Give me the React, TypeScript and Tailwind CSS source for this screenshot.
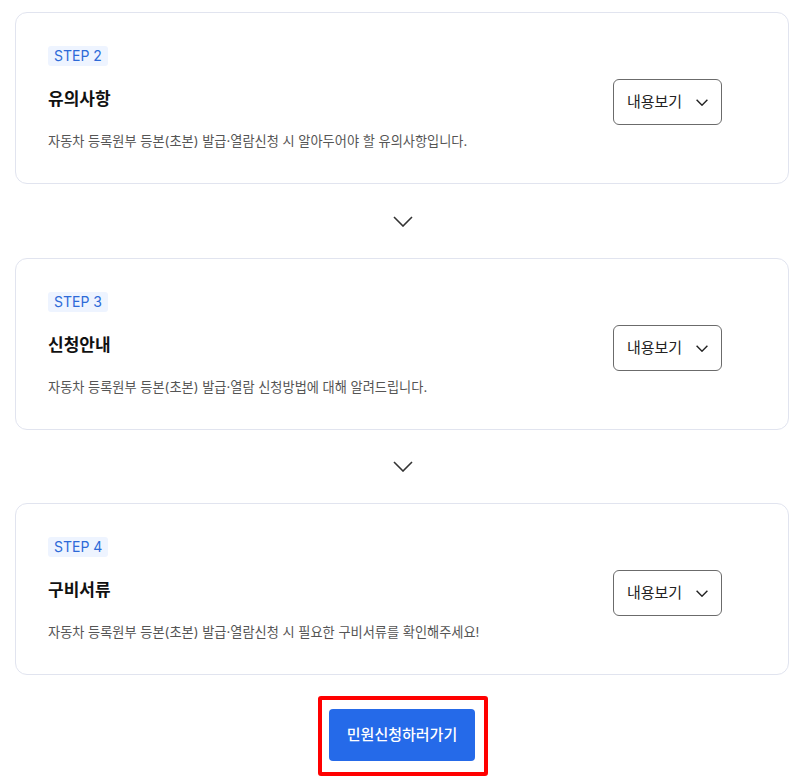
import React from "react";

const steps = [
  { step: "STEP 2", title: "유의사항", desc: "자동차 등록원부 등본(초본) 발급·열람신청 시 알아두어야 할 유의사항입니다." },
  { step: "STEP 3", title: "신청안내", desc: "자동차 등록원부 등본(초본) 발급·열람 신청방법에 대해 알려드립니다." },
  { step: "STEP 4", title: "구비서류", desc: "자동차 등록원부 등본(초본) 발급·열람신청 시 필요한 구비서류를 확인해주세요!" },
];

function Chevron({ className, w = 1.6 }: { className?: string; w?: number }) {
  return (
    <svg className={className} viewBox="0 0 20 11" fill="none" stroke="currentColor" strokeWidth={w}>
      <path d="M1 1l9 9 9-9" />
    </svg>
  );
}

function Card({ step, title, desc }: { step: string; title: string; desc: string }) {
  return (
    <div className="ml-[15px] w-[774px] h-[172px] rounded-[12px] border border-[#e1e4ef] bg-white flex pl-[32px] pr-[66px] pt-[33px]">
      <div className="flex-1 flex flex-col items-start">
        <span className="h-[20px] px-[6px] rounded-[3px] bg-[#eef4ff] text-[#2d6ad8] text-[14px] leading-[20px] font-normal">
          {step}
        </span>
        <h3 className="mt-[21px] text-[17px] leading-[24px] font-bold text-[#111]">{title}</h3>
        <p className="mt-[21px] text-[13.2px] leading-[18px] text-[#555]">{desc}</p>
      </div>
      <button className="mt-[33px] w-[109px] h-[46px] rounded-[6px] border border-[#6b6b6b] bg-white flex items-center justify-center gap-[14px] text-[15px] text-[#222]">
        <span>내용보기</span>
        <Chevron className="w-[12px] h-[7px] text-[#222]" w={2.4} />
      </button>
    </div>
  );
}

export default function App() {
  return (
    <div
      className="w-[800px] h-[779px] bg-white overflow-hidden pt-[12px]"
      style={{ fontFamily: "Inter, 'Noto Sans CJK KR', 'Noto Sans', sans-serif" }}
    >
      <Card {...steps[0]} />
      <div className="h-[74px] flex items-center justify-center pl-[5px]">
        <Chevron className="w-[20px] h-[11px] text-[#333]" />
      </div>
      <Card {...steps[1]} />
      <div className="h-[73px] flex items-center justify-center pl-[5px]">
        <Chevron className="w-[20px] h-[11px] text-[#333]" />
      </div>
      <Card {...steps[2]} />
      <div className="mt-[21px] flex justify-center pl-[6px]">
        <div className="border-4 border-[#ff0000] rounded-[3px] pl-[7px] pr-[9px] pt-[9px] pb-[11px]">
          <button className="w-[146px] h-[52px] rounded-[4px] bg-[#256ae9] text-white text-[15px] font-medium">
            민원신청하러가기
          </button>
        </div>
      </div>
    </div>
  );
}
